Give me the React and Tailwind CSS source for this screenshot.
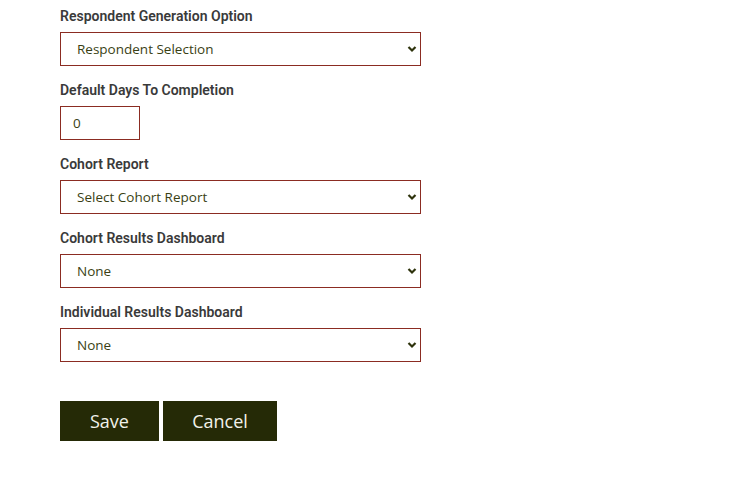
const fields = [
  { label: 'Respondent Generation Option', value: 'Respondent Selection' },
  { label: 'Default Days To Completion', value: '0', input: true },
  { label: 'Cohort Report', value: 'Select Cohort Report' },
  { label: 'Cohort Results Dashboard', value: 'None' },
  { label: 'Individual Results Dashboard', value: 'None' },
];

const Chevron = () => (
  <svg
    className="pointer-events-none absolute right-[4px] top-1/2 -translate-y-1/2"
    width="10"
    height="8"
    viewBox="0 0 10 8"
  >
    <path d="M1.5 2 L5 5.5 L8.5 2" fill="none" stroke="#2e330c" strokeWidth="2.2" />
  </svg>
);

const App = () => {
  return (
    <div className="min-h-[496px] w-[748px] bg-white font-['Roboto',sans-serif]">
      <form className="flex flex-col pl-[60px] pt-[6px]" onSubmit={(e) => e.preventDefault()}>
        {fields.map((f) => (
          <div key={f.label} className="mb-[14px] flex flex-col">
            <label className="mb-[6px] h-[20px] text-[14px] leading-[20px] font-semibold text-[#3a3a3a]">
              {f.label}
            </label>
            {f.input ? (
              <input
                defaultValue={f.value}
                className="h-[34px] w-[80px] border border-[#8b2c22] bg-white pl-[12px] pr-[8px] font-['Open_Sans',sans-serif] text-[13.5px] text-[#3a3f14] outline-none"
              />
            ) : (
              <div className="relative h-[34px] w-[361px]">
                <select
                  defaultValue={f.value}
                  className="h-full w-full appearance-none border border-[#8b2c22] bg-white pl-[16px] font-['Open_Sans',sans-serif] text-[13.5px] text-[#3a3f14] outline-none"
                >
                  <option>{f.value}</option>
                </select>
                <Chevron />
              </div>
            )}
          </div>
        ))}
        <div className="mt-[25px] flex gap-[4px]">
          <button className="h-[40px] w-[99px] bg-[#252a06] font-['Open_Sans',sans-serif] text-[18px] text-[#f2f2ea]">
            Save
          </button>
          <button className="h-[40px] w-[114px] bg-[#252a06] font-['Open_Sans',sans-serif] text-[18px] text-[#f2f2ea]">
            Cancel
          </button>
        </div>
      </form>
    </div>
  );
};

export default App;
